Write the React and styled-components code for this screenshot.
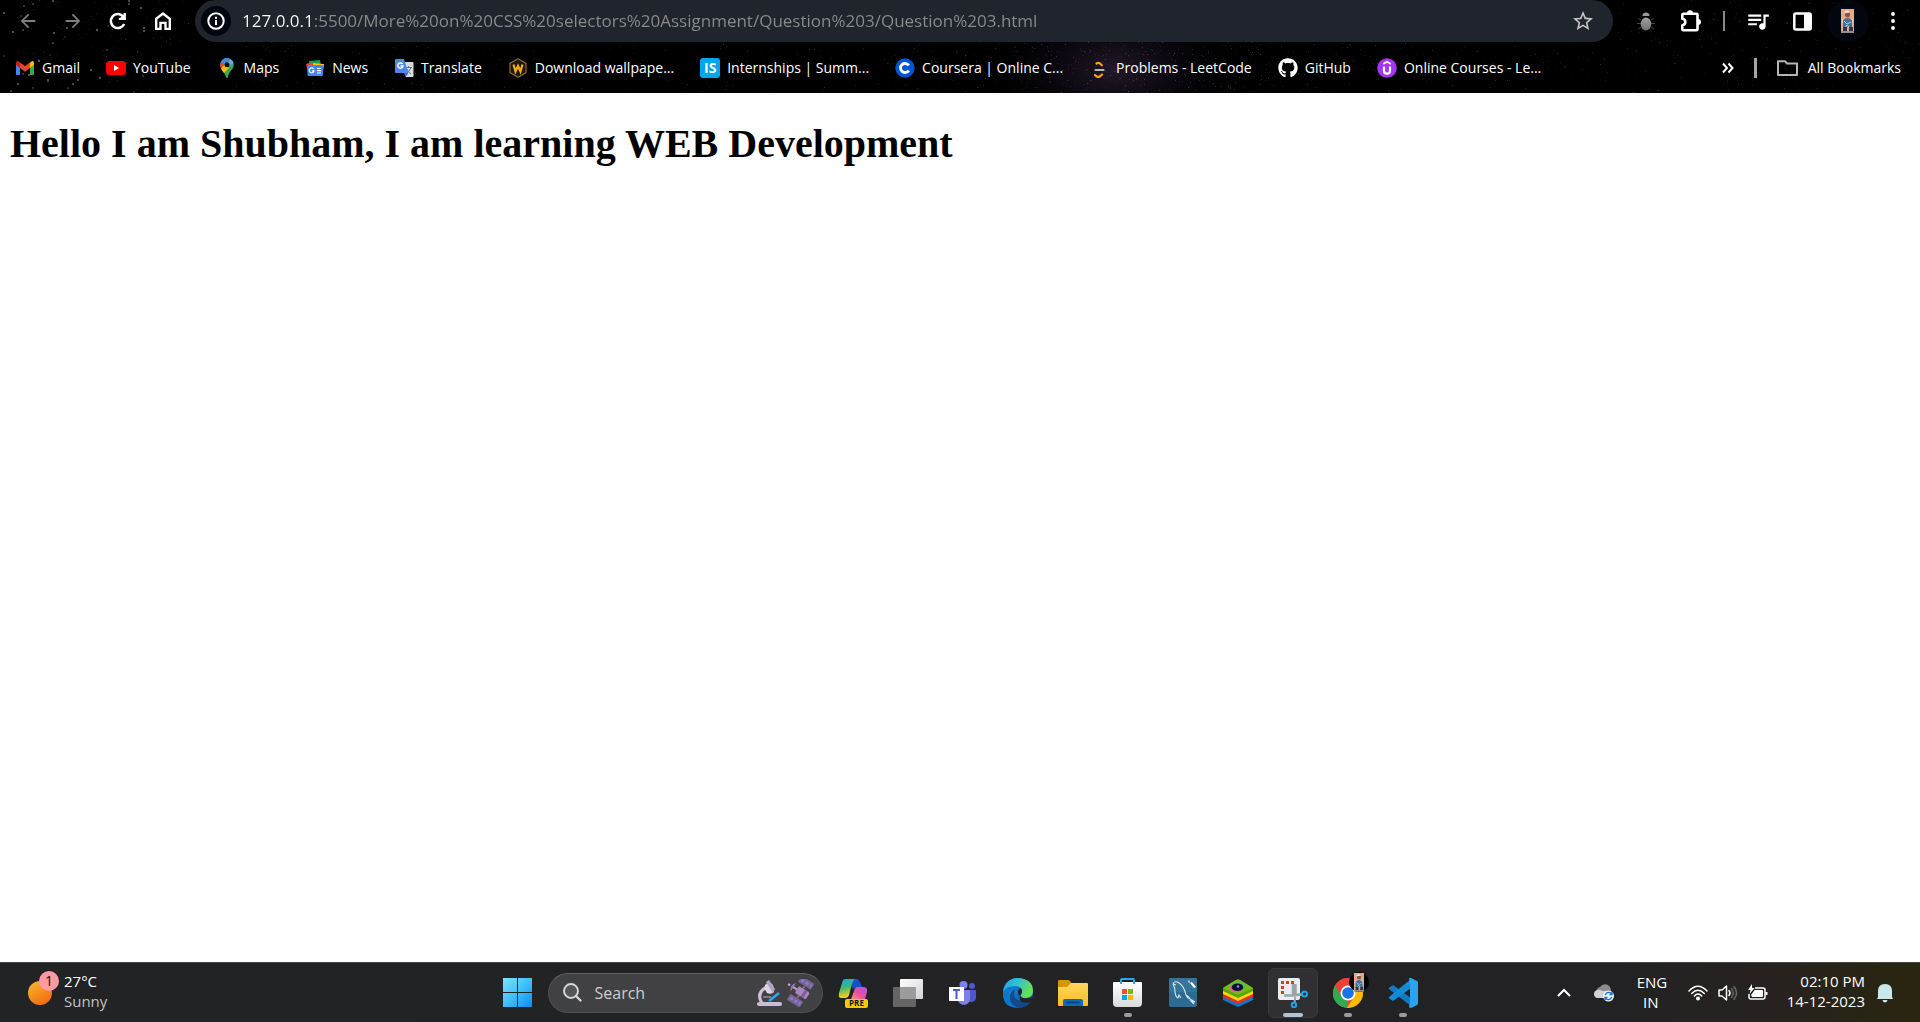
import React from "react";
import styled, { createGlobalStyle } from "styled-components";
import {
  MdArrowBack,
  MdArrowForward,
  MdStarBorder,
  MdQueueMusic,
} from "react-icons/md";
import { FaGithub } from "react-icons/fa";

const uiFont = `"Segoe UI", "Open Sans", "Noto Sans", sans-serif`;

const GlobalStyle = createGlobalStyle`
  *, *::before, *::after { box-sizing: border-box; }
  body { margin: 0; background: #fff; font-family: ${uiFont}; }
  button, input { font: inherit; color: inherit; }
  svg { display: block; flex: none; }
`;

const Screen = styled.div`
  min-height: 100vh;
  display: flex;
  flex-direction: column;
`;

/* ---------- browser chrome ---------- */

const BrowserHeader = styled.header`
  position: relative;
  background: #000;
  color: #fff;
  overflow: hidden;
`;

const StarField = styled.svg`
  position: absolute;
  inset: 0;
  width: 100%;
  height: 100%;
`;

const Toolbar = styled.div`
  position: relative;
  display: flex;
  align-items: center;
  height: 42px;
  padding: 0 5px;
`;

const ToolButton = styled.button`
  display: flex;
  align-items: center;
  justify-content: center;
  width: 45px;
  height: 42px;
  padding: 0;
  border: 0;
  background: none;
  color: ${(p) => (p.$muted ? "#7d7d7d" : "#fff")};
`;

const AddressBar = styled.form`
  flex: 1;
  min-width: 0;
  display: flex;
  align-items: center;
  height: 42px;
  margin: 0 10px;
  padding: 0 8px 0 6px;
  border-radius: 21px;
  background: #20242d;
`;

const SiteInfo = styled.button`
  display: flex;
  align-items: center;
  justify-content: center;
  width: 30px;
  height: 30px;
  padding: 0;
  border: 0;
  border-radius: 50%;
  background: #03060f;
  color: #fff;
`;

const AddressInput = styled.input`
  flex: 1;
  min-width: 0;
  height: 30px;
  margin-left: 11px;
  padding: 0;
  border: 0;
  outline: 0;
  font-size: 17px;
  line-height: 30px;
  background: linear-gradient(90deg, #fff 71px, #8b8b8c 71px);
  background-clip: text;
  -webkit-background-clip: text;
  -webkit-text-fill-color: transparent;
`;

const ToolDivider = styled.span`
  width: 2px;
  height: 20px;
  margin: 0 10px;
  background: #8a8a8a;
`;

const Profile = styled.span`
  display: flex;
  align-items: center;
  justify-content: center;
  width: 42px;
  height: 42px;
  border-radius: 50%;
  background: #03060f;
`;

const BookmarksBar = styled.nav`
  position: relative;
  display: flex;
  align-items: center;
  height: 51px;
  padding: 0 19px 0 15px;
  font-size: 14px;
  line-height: 20px;
  white-space: nowrap;
`;

const BookmarkList = styled.div`
  flex: 1;
  min-width: 0;
  display: flex;
  gap: 26px;
  overflow: hidden;
`;

const Bookmark = styled.a`
  display: flex;
  align-items: center;
  gap: ${(p) => p.$gap || "7px"};
  color: #fff;
  text-decoration: none;
`;

const OverflowButton = styled.button`
  display: flex;
  padding: 0;
  border: 0;
  background: none;
`;

const BookmarkDivider = styled.span`
  width: 3px;
  height: 20px;
  margin: 0 20px;
  background: #a5a5a5;
`;

/* ---------- page ---------- */

const Page = styled.main`
  flex: 1;
  padding: 0 10px;
  background: #fff;
`;

const Title = styled.h1`
  margin: 28px 0 0;
  font-family: "Times New Roman", "Liberation Serif", serif;
  font-size: 40px;
  line-height: 46px;
  font-weight: 700;
  color: #000;
`;

/* ---------- taskbar ---------- */

const Taskbar = styled.footer`
  display: grid;
  grid-template-columns: 1fr auto 1fr;
  align-items: center;
  height: 60px;
  border-top: 1px solid #454547;
  background: linear-gradient(90deg, #222325 0%, #222224 84%, #272220 92%, #29260f 100%);
  color: #fff;
  font-size: 14px;
  line-height: 20px;
`;

const Weather = styled.button`
  justify-self: start;
  display: flex;
  align-items: center;
  gap: 5px;
  padding: 0 0 0 28px;
  border: 0;
  background: none;
  text-align: left;
`;

const Stack = styled.span`
  display: flex;
  flex-direction: column;
  width: ${(p) => p.$width || "auto"};
  padding-bottom: ${(p) => (p.$raised ? "4px" : "2px")};
  font-size: 15px;
  text-align: ${(p) => p.$align || "left"};
  white-space: nowrap;
`;

const Soft = styled.span`
  color: #c2c2c2;
`;

const WeatherIcon = styled.span`
  position: relative;
  width: 31px;
  height: 44px;
  display: flex;
  align-items: center;
`;

const Badge = styled.span`
  position: absolute;
  top: 0;
  right: 0;
  width: 20px;
  height: 20px;
  border-radius: 50%;
  background: #ff99a4;
  color: #111;
  text-align: center;
  line-height: 20px;
`;

const Apps = styled.nav`
  display: flex;
  align-items: center;
  gap: 5px;
`;

const AppButton = styled.button`
  position: relative;
  display: flex;
  align-items: center;
  justify-content: center;
  width: 50px;
  height: 50px;
  padding: 0;
  border: 1px solid ${(p) => (p.$active ? "#39393b" : "transparent")};
  border-radius: 6px;
  background: ${(p) => (p.$active ? "#303032" : "none")};
`;

const Indicator = styled.span`
  position: absolute;
  bottom: 0;
  left: 50%;
  transform: translateX(-50%);
  width: ${(p) => (p.$active ? "20px" : "8px")};
  height: 4px;
  border-radius: 2px;
  background: ${(p) => (p.$active ? "#adc6d6" : "#9b9b9d")};
`;

const SearchBox = styled.label`
  display: flex;
  align-items: center;
  width: 275px;
  height: 40px;
  padding: 0 8px 0 14px;
  border: 1px solid #505052;
  border-top-color: #636365;
  border-radius: 20px;
  background: #414143;
`;

const SearchInput = styled.input`
  flex: 1;
  min-width: 0;
  padding: 0;
  margin-left: 13px;
  border: 0;
  outline: 0;
  background: none;
  font-size: 16px;
  &::placeholder { color: #cfcfcf; opacity: 1; }
`;

const Tray = styled.div`
  justify-self: end;
  display: flex;
  align-items: center;
  gap: 23px;
  padding-right: 27px;
`;

const TrayGroup = styled.span`
  display: flex;
  align-items: center;
  gap: ${(p) => p.$gap};
`;

/* ---------- drawings ---------- */

const stars = (() => {
  let seed = 20231214;
  const next = () => {
    seed = (seed * 1103515245 + 12345) % 2147483648;
    return seed / 2147483648;
  };
  const list = [];
  for (let i = 0; i < 2600; i += 1) {
    const dense = i % 3 === 0;
    const x = dense ? 1130 + (next() + next() + next() - 1.5) * 260 : next() * 1920;
    list.push({ x: Math.round(x), y: Math.round(next() * 92), o: 0.04 + next() * next() * 0.22 });
  }
  for (let i = 0; i < 40; i += 1) {
    list.push({ x: Math.round(next() * 145), y: Math.round(next() * 92), o: 0.12 + next() * 0.25, s: 2 });
  }
  return list;
})();

const Night = () => (
  <StarField viewBox="0 0 1920 93" preserveAspectRatio="xMidYMid slice" aria-hidden="true">
    <defs>
      <radialGradient id="haze">
        <stop offset="0" stopColor="#3b2a45" stopOpacity=".6" />
        <stop offset="1" stopColor="#0a0a1a" stopOpacity="0" />
      </radialGradient>
    </defs>
    <ellipse cx="1115" cy="70" rx="120" ry="70" fill="url(#haze)" />
    {stars.map((s, i) => (
      <rect key={i} x={s.x} y={s.y} width={s.s || 1} height={s.s || 1} fill="#dfe4ff" opacity={s.o} />
    ))}
  </StarField>
);

const ReloadIcon = () => (
  <svg width="20" height="20" viewBox="0 0 20 20" fill="none" stroke="#fff" strokeWidth="2.5">
    <path d="M16.2 13A7 7 0 1 1 14.9 5.2" />
    <path d="M16.8 2v6h-6" strokeWidth="2.2" />
    <path d="m16 3-4.5 4.5H16z" fill="#fff" stroke="none" />
  </svg>
);

const HomeIcon = () => (
  <svg width="20" height="20" viewBox="0 0 20 20" fill="none" stroke="#fff" strokeWidth="2.4">
    <path d="M3.2 7.8 10 2.6l6.8 5.2v10.1h-4.3v-6h-5v6H3.2z" />
  </svg>
);

const InfoIcon = () => (
  <svg width="18" height="18" viewBox="0 0 18 18" fill="none" stroke="#fff" strokeWidth="2">
    <circle cx="9" cy="9" r="7.7" />
    <path d="M9 8v5M9 4.8v2" />
  </svg>
);

const BugIcon = () => (
  <svg width="18" height="19" viewBox="0 0 18 19">
    <defs>
      <linearGradient id="bug" x2="0" y2="1">
        <stop stopColor="#a2a2a2" />
        <stop offset="1" stopColor="#707070" />
      </linearGradient>
    </defs>
    <g stroke="#444" strokeWidth="1" fill="none">
      <path d="M1 6.5 4 8M0 11.5h4M1 17l3-2M17 6.5 14 8M18 11.5h-4M17 17l-3-2" />
    </g>
    <path d="M5.5 4a3.5 3.5 0 0 1 7 0z" fill="#999" />
    <ellipse cx="9" cy="12" rx="5.3" ry="6.5" fill="url(#bug)" />
  </svg>
);

const PuzzleIcon = () => (
  <svg width="22" height="22" viewBox="0 0 22 22">
    <path
      d="M2.3 5.5V4.8c0-.7.4-1.1 1.1-1.1h13c.7 0 1.1.4 1.1 1.1v14.4c0 .7-.4 1.1-1.1 1.1h-13c-.7 0-1.1-.4-1.1-1.1v-4c4-.5 4-5.9 0-6.4z"
      fill="none"
      stroke="#fff"
      strokeWidth="2.6"
      strokeLinejoin="round"
    />
    <path d="M7 3.2a3 3 0 0 1 6 0zM18 9a3 3 0 0 1 0 6z" fill="#fff" />
  </svg>
);

const SidePanelIcon = () => (
  <svg width="19" height="19" viewBox="0 0 19 19">
    <rect x="1.3" y="1.6" width="16.4" height="15.8" rx="1.5" fill="none" stroke="#fff" strokeWidth="2.5" />
    <path d="M11 1h7v17h-7z" fill="#fff" />
  </svg>
);

const Portrait = () => (
  <g>
    <path d="M0 0h13v24H0z" fill="#e6a981" />
    <path d="M1 10h11v4H1z" fill="#d9d5cf" />
    <path d="M4 3q3-3 5 0v4q-2 3-5 0z" fill="#86584a" />
    <path d="M3.5 2.5q3-3 6 1l-6 .8z" fill="#e8e4ef" />
    <path d="M2 11q4-4 9 0v7H2z" fill="#456f9a" />
    <path d="m3 12 3 3 4-2M3 20l3-4 4 4" stroke="#a7d1df" fill="none" />
    <path d="M2 18h4v6H2zM8 18h4v6H8z" fill="#27364e" />
    <path d="M0 22h13v2H0z" fill="#9b8b84" />
  </g>
);

const AvatarIcon = () => (
  <svg width="13" height="24" viewBox="0 0 13 24"><Portrait /></svg>
);

const DotsIcon = () => (
  <svg width="4" height="18" viewBox="0 0 4 18" fill="#fff">
    <circle cx="2" cy="2" r="1.9" /><circle cx="2" cy="9" r="1.9" /><circle cx="2" cy="16" r="1.9" />
  </svg>
);

const ChevronsIcon = () => (
  <svg width="12" height="12" viewBox="0 0 12 12" fill="none" stroke="#fff" strokeWidth="2">
    <path d="m1 1.5 4 4.5-4 4.5M6.5 1.5l4 4.5-4 4.5" />
  </svg>
);

const FolderIcon = () => (
  <svg width="21" height="16" viewBox="0 0 21 16" fill="none" stroke="#b5b5b5" strokeWidth="2" strokeLinejoin="round">
    <path d="M1 1.2h7l2 2.3h10V15H1z" />
  </svg>
);

const GmailIcon = () => (
  <svg width="20" height="20" viewBox="0 0 20 20">
    <path d="M1 6v10q0 1 1 1h3V9z" fill="#4285f4" />
    <path d="M15 9v8h3q1 0 1-1V6z" fill="#34a853" />
    <path d="M15 4.5 17 3.2q2-.6 2 2V7l-4 3z" fill="#fbbc04" />
    <path d="M1 7V5.2q0-2.6 2-2L5 4.5V10z" fill="#c5221f" />
    <path d="M5 4.5 10 8l5-3.5V10l-5 3.7L5 10z" fill="#ea4335" />
  </svg>
);

const YouTubeIcon = () => (
  <svg width="20" height="20" viewBox="0 0 20 20">
    <rect y="3" width="20" height="14" rx="3.5" fill="#f00" />
    <path d="m8 7 5.2 3L8 13z" fill="#fff" />
  </svg>
);

const MapsIcon = () => (
  <svg width="20" height="20" viewBox="0 0 20 20">
    <clipPath id="pin"><path d="M10 0a6.8 6.8 0 0 1 6.8 6.8c0 4.7-5 6.2-5.8 12.2-.2 1.3-1.8 1.3-2 0-.6-3.5-5.8-7.2-5.8-12.2A6.8 6.8 0 0 1 10 0" /></clipPath>
    <g clipPath="url(#pin)">
      <path d="M0 0h20v20H0z" fill="#34a853" />
      <path d="m2 11 13-13H4L3 4l5 4z" fill="#4285f4" />
      <path d="M3 3.5 8 7 4 10.5H0z" fill="#ea4335" />
      <path d="m3 12 5-6 4 4-6 6z" fill="#fbbc04" />
      <path d="m14 1-4 4 3 3 5-4z" fill="#6ba0f7" />
    </g>
    <circle cx="10" cy="6.8" r="2.5" fill="#111" />
  </svg>
);

const NewsIcon = () => (
  <svg width="20" height="20" viewBox="0 0 20 20">
    <path d="m4 3 11-1 1 8H5z" fill="#0c9d58" />
    <path d="m1 6 6-2 3 7-7 4z" fill="#ea4335" />
    <path d="m8 5 11 1-1 7H8z" fill="#ffc107" />
    <rect x="2.5" y="7" width="15.5" height="11" rx="1" fill="#4285f4" />
    <path d="M8.5 10.8a2.4 2.4 0 1 0 .5 2H7M12 10.5h4M12 12.7h4M12 15h4" fill="none" stroke="#fff" strokeWidth="1.2" />
  </svg>
);

const TranslateIcon = () => (
  <svg width="20" height="20" viewBox="0 0 20 20">
    <path d="M8 4h10.5q1 0 1 1v13q0 1-1 1H12z" fill="#d8dadd" />
    <path d="M11 9.5h7M14.5 8v1.5M17 9.5q-1 4-5 5.5M13 11q1 3 4 5" stroke="#607d8b" fill="none" />
    <path d="M2 1h8l4.5 14H2q-1 0-1-1V2q0-1 1-1" fill="#4f86ec" />
    <path d="m10 15 4.5 0-3 4z" fill="#3367d6" />
    <path d="M8.5 6a2.6 2.6 0 1 0 .5 2H6.5" fill="none" stroke="#fff" strokeWidth="1.4" />
  </svg>
);

const WallpaperIcon = () => (
  <svg width="20" height="20" viewBox="0 0 20 20">
    <path d="m10 .8 8 4.6v9.2l-8 4.6-8-4.6V5.4z" fill="#141722" stroke="#94691a" strokeWidth="1.2" />
    <path d="m5.5 6.5 2 7L10 8l2.5 5.5 2-7" fill="none" stroke="#f9a80d" strokeWidth="2.2" />
  </svg>
);

const IconTile = styled.span`
  display: flex;
  align-items: center;
  justify-content: center;
  width: 20px;
  height: 20px;
  border-radius: 3px;
  background: #00a5ec;
  color: #fff;
  font-size: 14px;
  font-weight: 700;
`;

const CourseraIcon = () => (
  <svg width="20" height="20" viewBox="0 0 20 20">
    <circle cx="10" cy="10" r="9.7" fill="#0056d2" />
    <path d="M13.8 7.6a4.5 4.5 0 1 0 0 4.8" fill="none" stroke="#fff" strokeWidth="2.8" />
  </svg>
);

const LeetCodeIcon = () => (
  <svg width="20" height="20" viewBox="0 0 20 20" fill="none" strokeLinecap="round">
    <path d="m5 7-2.5 3q-1.5 2 0 4L5 17" stroke="#15110b" strokeWidth="2.2" />
    <path d="M7.5 5.5q2-1.3 3.5 0l1.8 1.8M6 17q2.5 3 5 1.5l2-2" stroke="#f89f1b" strokeWidth="2.2" />
    <path d="M6.5 12H14.5" stroke="#b8b8b8" strokeWidth="2.2" />
  </svg>
);

const UdemyIcon = () => (
  <svg width="20" height="20" viewBox="0 0 20 20" fill="none" stroke="#fff" strokeWidth="2.2">
    <circle cx="10" cy="10" r="9.8" fill="#a435f0" stroke="none" />
    <path d="m6.2 6 3.8-2.2L13.8 6" strokeWidth="1.7" />
    <path d="M7 8.5v4.2q0 3 3 3t3-3V8.5" />
  </svg>
);

const SunIcon = () => (
  <svg width="24" height="24" viewBox="0 0 24 24">
    <defs><linearGradient id="sun" x2=".6" y2="1"><stop stopColor="#f5bd2e" /><stop offset="1" stopColor="#f36d10" /></linearGradient></defs>
    <circle cx="12" cy="12" r="12" fill="url(#sun)" />
  </svg>
);

const StartIcon = () => (
  <svg width="29" height="29" viewBox="0 0 29 29">
    <defs><linearGradient id="win" gradientUnits="userSpaceOnUse" x1="0" y1="0" x2="29" y2="29"><stop stopColor="#7fe0ff" /><stop offset=".5" stopColor="#3fc0fb" /><stop offset="1" stopColor="#0a8ef5" /></linearGradient></defs>
    <path d="M0 0h14v14H0zM15 0h14v14H15zM0 15h14v14H0zM15 15h14v14H15z" fill="url(#win)" />
  </svg>
);

const SearchIcon = () => (
  <svg width="19" height="19" viewBox="0 0 19 19" fill="none" stroke="#d5d9da" strokeLinecap="round">
    <circle cx="8" cy="8" r="7" strokeWidth="1.9" fill="#565658" />
    <path d="m13 13 4.5 4.5" strokeWidth="2.3" />
  </svg>
);

const DoodleIcon = () => (
  <svg width="57" height="28" viewBox="0 0 57 28">
    <path d="M8 9q-9 6-3 15" fill="none" stroke="#cfc0d9" strokeWidth="3" />
    <path d="M8 6q4-5 8 0l1 7q-3 3-7 1L7 9z" fill="#ddd3e4" />
    <path d="m9 3 3-2 6 9-2 4z" fill="#b3a3c3" />
    <path d="M6 18h8" stroke="#81768e" strokeWidth="2" />
    <path d="m12 22 10-8" stroke="#2caceb" strokeWidth="2.5" />
    <rect y="23" width="25" height="4" rx="2" fill="#cbbbd5" />
    <g transform="translate(44 13) rotate(32)">
      <rect x="-8" y="-14" width="15" height="7" fill="#766493" />
      <path d="M-6-12h3v3h-3zM-1-12h3v3h-3zM4-12h2v3H4z" fill="#9274d5" />
      <rect x="-8" y="7" width="15" height="7" fill="#766493" />
      <path d="M-6 9h3v3h-3zM-1 9h3v3h-3zM4 9h2v3H4z" fill="#9274d5" />
      <path d="M-1-7h2V7h-2z" fill="#796789" />
      <rect x="-5" y="-4" width="13" height="8" rx="1.5" fill="#a987be" />
      <path d="M2-4h3v8H2z" fill="#7d5c9a" />
      <path d="M-5 0h-5" stroke="#c49ad5" strokeWidth="2" />
      <path d="M-9-5q-5 5 0 10z" fill="#9678b0" />
      <circle cx="-14" cy="0" r="1.3" fill="#d39ee7" />
    </g>
  </svg>
);

const CopilotIcon = () => (
  <svg width="30" height="30" viewBox="0 0 30 30">
    <defs>
      <linearGradient id="cpA" x2=".2" y2="1"><stop stopColor="#17a8e8" /><stop offset=".5" stopColor="#42b777" /><stop offset="1" stopColor="#f6d314" /></linearGradient>
      <linearGradient id="cpB" x1="1" x2=".2" y2="1"><stop stopColor="#a957ee" /><stop offset=".5" stopColor="#ea4f9e" /><stop offset="1" stopColor="#ff9b54" /></linearGradient>
    </defs>
    <path d="M12 1h6q3 0 4 3l2 5h-5q-3 0-4 3z" fill="#1450cf" />
    <path d="M7 1h10q-2 1-3 5l-3 11q-1 3-4 3H3q-3 0-2-5L4 5q1-4 3-4" fill="url(#cpA)" />
    <path d="M19 9h6q5 0 4 5l-2 7q-1 3-4 3H12l4-11q1-4 3-4" fill="url(#cpB)" />
    <rect x="7" y="21" width="23" height="9" rx="2" fill="#fbc70d" />
    <text x="18.5" y="28.4" textAnchor="middle" fontFamily="Open Sans, sans-serif" fontWeight="700" fontSize="8" fill="#151515">PRE</text>
  </svg>
);

const TaskViewIcon = () => (
  <svg width="30" height="28" viewBox="0 0 30 28">
    <defs><linearGradient id="tv" x2="1" y2="1"><stop stopColor="#fff" /><stop offset="1" stopColor="#d3d3d3" /></linearGradient></defs>
    <rect y="8" width="23" height="20" rx="1" fill="#656565" />
    <rect x="7" width="23" height="20" rx="1" fill="url(#tv)" />
    <path d="M7 8h16v12H7z" fill="#9c9c9c" />
  </svg>
);

const TeamsIcon = () => (
  <svg width="27" height="24" viewBox="0 0 27 24">
    <circle cx="23" cy="5" r="3" fill="#5059c9" />
    <circle cx="14.5" cy="4" r="4" fill="#7b83eb" />
    <path d="M18 9h9v7q0 5-5 5h-4z" fill="#5059c9" />
    <path d="M8 9h13v8q0 6-6 7-6-1-7-7z" fill="#7b83eb" />
    <rect y="6" width="15" height="14" fill="#fff" />
    <path d="M4 9h7M7.5 9v9" stroke="#5059c9" strokeWidth="2" />
  </svg>
);

const EdgeIcon = () => (
  <svg width="30" height="30" viewBox="0 0 30 30">
    <defs>
      <linearGradient id="edA" x2="1" y2=".4"><stop stopColor="#1aa0e6" /><stop offset=".5" stopColor="#35c1d3" /><stop offset="1" stopColor="#68e054" /></linearGradient>
      <linearGradient id="edB" x2="1" y2="1"><stop stopColor="#1595df" /><stop offset="1" stopColor="#0c4ba5" /></linearGradient>
    </defs>
    <circle cx="15" cy="15" r="15" fill="url(#edB)" />
    <path d="M0 14Q2 0 15 0q15 1 15 13 0 7-8 7-5 0-5-2 2-2 2-4 0-6-7-6Q4 8 0 14" fill="url(#edA)" />
    <path d="M0 14q4-6 11-5-6 3-6 9 0 8 9 12Q-1 29 0 14" fill="#0b78d0" />
    <path d="M12 11q-4 11 8 12 4 1 9-2-3 8-12 9-9-2-10-9-1-6 5-10" fill="#114a8b" />
    <path d="M17 18q-2-1-2-4t3-4q2 4 0 6-2 2 2 4 6 1 12-2l-2 5q-6 3-11 1-3-1-2-6" fill="#232427" />
  </svg>
);

const ExplorerIcon = () => (
  <svg width="30" height="26" viewBox="0 0 30 26">
    <defs><linearGradient id="fold" x2="0" y2="1"><stop stopColor="#ffd659" /><stop offset="1" stopColor="#fbbd27" /></linearGradient></defs>
    <path d="M0 1q0-1 1-1h9q1 0 2 1l2 3v5H0z" fill="#d99508" />
    <path d="M0 7h9l4-4h16q1 0 1 1v21q0 1-1 1H1q-1 0-1-1z" fill="url(#fold)" />
    <path d="M5 26v-5q0-2 2-2h16q2 0 2 2v5z" fill="#0b6bb8" />
    <path d="M9 22.5h12" stroke="#063e79" strokeWidth="1.5" strokeLinecap="round" />
  </svg>
);

const StoreIcon = () => (
  <svg width="29" height="30" viewBox="0 0 29 30">
    <defs><linearGradient id="bag" x2="0" y2="1"><stop stopColor="#fff" /><stop offset="1" stopColor="#dadada" /></linearGradient></defs>
    <path d="M0 5q0-1 1-1h27q1 0 1 1v20q0 4-4 4H4q-4 0-4-4z" fill="url(#bag)" />
    <path d="M8 6V2q0-1 1-1h11q1 0 1 1v4" fill="none" stroke="#28a8e6" strokeWidth="2" />
    <path d="M9 11h5v5H9z" fill="#f25022" /><path d="M15 11h5v5h-5z" fill="#7fba00" />
    <path d="M9 17h5v5H9z" fill="#00a4ef" /><path d="M15 17h5v5h-5z" fill="#ffb900" />
  </svg>
);

const MySqlIcon = () => (
  <svg width="28" height="29" viewBox="0 0 28 29" fill="none">
    <rect width="28" height="29" rx="2" fill="#2d6b93" />
    <path d="M0 0h28v14H0z" fill="#3d7fa5" opacity=".5" />
    <path d="M4 6q2-4 6-1 5 3 7 12 3 1 4 4l5 3-4-1 3 3M4 6q2 4 2 7 0 5 3 7l1-3 2 3M4 6l3 1M17 17q1 3 4 4" stroke="#d7e7ee" strokeWidth="1.1" />
    <path d="m20 2 1 3 2-1 4 5-2 1-4-5-2-1z" fill="#fff" />
  </svg>
);

const BlueStacksIcon = () => (
  <svg width="30" height="28" viewBox="0 0 30 28">
    <path d="M0 17v4l15 7 15-7v-4l-15 5z" fill="#0879c9" />
    <path d="M0 14v4l15 7 15-7v-4z" fill="#e52d27" />
    <path d="M0 11v4l15 7 15-7v-4z" fill="#ffd400" />
    <path d="M0 9 13 1q2-1 4 0l13 8v3l-15 7L0 12z" fill="#53a70d" />
    <path d="m0 9 13-8q2-1 4 0l13 8-15 7z" fill="#74bd18" />
    <ellipse cx="13.5" cy="9" rx="7" ry="4.3" fill="#e65aae" />
    <ellipse cx="15" cy="7.5" rx="6.5" ry="4" fill="#3fb5a0" />
    <ellipse cx="14.5" cy="8.2" rx="5.7" ry="3.8" fill="#0c1224" />
    <circle cx="15" cy="7.5" r="1.2" fill="#8c8cff" />
  </svg>
);

const SnipIcon = () => (
  <svg width="30" height="30" viewBox="0 0 30 30" fill="none">
    <rect width="22" height="22" rx="2" fill="#e9edf0" />
    <path d="M3 4.5h13M4.5 3v13" stroke="#d63e0b" strokeWidth="3" strokeDasharray="3 2" />
    <path d="M15 6v10.5h9M17.5 6v12M6 17.5h11" stroke="#9ca4aa" strokeWidth="2.5" />
    <path d="M17.5 18.5 16.5 24M19 17.5l5-1" stroke="#9ca4aa" strokeWidth="2" />
    <circle cx="26.5" cy="16" r="2.5" stroke="#1da5eb" strokeWidth="2" />
    <circle cx="16" cy="27" r="2.2" stroke="#1da5eb" strokeWidth="2" />
  </svg>
);

const ChromeIcon = () => (
  <svg width="42" height="42" viewBox="-6 0 42 42">
    <clipPath id="chromeDisc"><circle cx="15" cy="21" r="15" /></clipPath>
    <g clipPath="url(#chromeDisc)">
      <path d="M0 6h30v30H0z" fill="#ea4335" />
      <path d="m1 12 14 23-5 3-12-9V13z" fill="#34a853" />
      <path d="M15 14h16v23H13l8-12z" fill="#fbbc05" />
      <path d="M2 13 8.5 24.5 15 29l-3 8-14-8z" fill="#34a853" />
      <path d="M15 14h17L26 5H4l-3 7 7.5 12z" fill="#ea4335" />
    </g>
    <circle cx="15" cy="21" r="7.5" fill="#fff" />
    <circle cx="15" cy="21" r="5.8" fill="#1a73e8" />
    <circle cx="26" cy="10" r="10" fill="#050505" />
    <g transform="translate(21 1) scale(.77)"><Portrait /></g>
  </svg>
);

const CodeIcon = () => (
  <svg width="30" height="30" viewBox="0 0 30 30">
    <path d="m2 9 3-2 18 13v8L1 11q-1-1 1-2" fill="#0f7cc4" />
    <path d="m2 21 3 2L23 10V1L1 19q-1 1 1 2" fill="#138cd8" />
    <path d="M21 0q1-1 2 0l6 3q1 0 1 2v20q0 2-1 2l-6 3q-1 0-2-1l1-5V6z" fill="#2aa4f2" />
  </svg>
);

const UpIcon = () => (
  <svg width="14" height="9" viewBox="0 0 14 9" fill="none" stroke="#fff" strokeWidth="2"><path d="m1 8 6-6 6 6" /></svg>
);

const CloudIcon = () => (
  <svg width="20" height="18" viewBox="0 0 20 18">
    <path d="M4 10a4 4 0 0 1 2-7q3-4 8-2 3 2 3 6l-7 5z" fill="#8c8c8c" />
    <path d="M3 6q3-1 5 1h7v7H3Q0 13 0 10t3-4" fill="#d2d2d2" />
    <circle cx="14.5" cy="12" r="5.5" fill="#e8f2fa" />
    <path d="M11.3 11q1-2.600 3.400-2.600 2 0 3 1.600M17.700 13q-1 2.600-3.400 2.600-2 0-3-1.600M18 8v2.500h-2.500M11 16v-2.500h2.500" fill="none" stroke="#1671c8" strokeWidth="1.3" />
  </svg>
);

const WifiIcon = () => (
  <svg width="20" height="16" viewBox="0 0 20 16" fill="none" stroke="#fff" strokeWidth="1.5" strokeLinecap="round">
    <path d="M1 6q9-9.5 18 0M3.7 8.5q6.3-6.5 12.6 0M6.3 11q3.7-4 7.4 0" />
    <circle cx="10" cy="13.5" r="1.3" fill="#fff" />
  </svg>
);

const VolumeIcon = () => (
  <svg width="20" height="18" viewBox="0 0 20 18" fill="none" stroke="#fff" strokeWidth="1.5" strokeLinejoin="round" strokeLinecap="round">
    <path d="M1 6h3l4.5-4v14L4 12H1z" />
    <path d="M11 6.5q2 2.5 0 5" />
    <path d="M13.5 4.5q3.5 4.5 0 9M16 2.5q5 6.5 0 13" stroke="#6b6765" />
  </svg>
);

const BatteryIcon = () => (
  <svg width="20" height="17" viewBox="0 0 20 17" fill="none" stroke="#fff" strokeWidth="1.5">
    <path d="M7 4h8q2 0 2 2v7q0 2-2 2H3q-2 0-2-2v-3" />
    <path d="M6 7q0-1 1-1h7q1 0 1 1v5q0 1-1 1H4l-1-2z" fill="#fff" stroke="none" />
    <path d="M18.5 8v3" strokeWidth="2" />
    <path d="M4 0 0 6h2.5L1.5 10 6.5 4H4z" fill="#fff" stroke="none" />
  </svg>
);

const BellIcon = () => (
  <svg width="16" height="20" viewBox="0 0 16 20" fill="#cbe7ee">
    <path d="M1 14V8q0-7 7-7t7 7v6l1 2H0zM5.5 17h5q-.5 2.5-2.5 2.5T5.5 17" />
  </svg>
);

const bookmarks = [
  ["Gmail", <GmailIcon />],
  ["YouTube", <YouTubeIcon />],
  ["Maps", <MapsIcon />],
  ["News", <NewsIcon />],
  ["Translate", <TranslateIcon />],
  ["Download wallpape...", <WallpaperIcon />],
  ["Internships | Summ...", <IconTile aria-hidden="true">IS</IconTile>],
  ["Coursera | Online C...", <CourseraIcon />],
  ["Problems - LeetCode", <LeetCodeIcon />],
  ["GitHub", <FaGithub size={20} />],
  ["Online Courses - Le...", <UdemyIcon />],
];

const apps = [
  { name: "Copilot", icon: <CopilotIcon /> },
  { name: "Task view", icon: <TaskViewIcon /> },
  { name: "Teams", icon: <TeamsIcon /> },
  { name: "Edge", icon: <EdgeIcon /> },
  { name: "File Explorer", icon: <ExplorerIcon /> },
  { name: "Microsoft Store", icon: <StoreIcon />, running: true },
  { name: "MySQL Workbench", icon: <MySqlIcon /> },
  { name: "BlueStacks", icon: <BlueStacksIcon /> },
  { name: "Snipping Tool", icon: <SnipIcon />, running: true, active: true },
  { name: "Chrome", icon: <ChromeIcon />, running: true },
  { name: "Visual Studio Code", icon: <CodeIcon />, running: true },
];

export default function App() {
  return (
    <Screen>
      <GlobalStyle />
      <BrowserHeader>
        <Night />
        <Toolbar>
          <ToolButton $muted aria-label="Back"><MdArrowBack size={22} /></ToolButton>
          <ToolButton $muted aria-label="Forward"><MdArrowForward size={22} /></ToolButton>
          <ToolButton aria-label="Reload"><ReloadIcon /></ToolButton>
          <ToolButton aria-label="Home"><HomeIcon /></ToolButton>
          <AddressBar onSubmit={(e) => e.preventDefault()}>
            <SiteInfo type="button" aria-label="Site information"><InfoIcon /></SiteInfo>
            <AddressInput
              aria-label="Address"
              spellCheck={false}
              defaultValue="127.0.0.1:5500/More%20on%20CSS%20selectors%20Assignment/Question%203/Question%203.html"
            />
            <ToolButton type="button" aria-label="Bookmark this page"><MdStarBorder size={24} color="#c4c4c4" /></ToolButton>
          </AddressBar>
          <ToolButton aria-label="Debugger"><BugIcon /></ToolButton>
          <ToolButton aria-label="Extensions"><PuzzleIcon /></ToolButton>
          <ToolDivider />
          <ToolButton aria-label="Media"><MdQueueMusic size={26} /></ToolButton>
          <ToolButton aria-label="Side panel"><SidePanelIcon /></ToolButton>
          <ToolButton aria-label="Profile"><Profile><AvatarIcon /></Profile></ToolButton>
          <ToolButton aria-label="Menu"><DotsIcon /></ToolButton>
        </Toolbar>
        <BookmarksBar aria-label="Bookmarks">
          <BookmarkList>
            {bookmarks.map(([label, icon]) => (
              <Bookmark href="#" key={label}>{icon}<span>{label}</span></Bookmark>
            ))}
          </BookmarkList>
          <OverflowButton aria-label="More bookmarks"><ChevronsIcon /></OverflowButton>
          <BookmarkDivider />
          <Bookmark href="#" $gap="10px"><FolderIcon /><span>All Bookmarks</span></Bookmark>
        </BookmarksBar>
      </BrowserHeader>

      <Page>
        <Title>Hello I am Shubham, I am learning WEB Development</Title>
      </Page>

      <Taskbar>
        <Weather>
          <WeatherIcon><SunIcon /><Badge>1</Badge></WeatherIcon>
          <Stack $raised><span>27°C</span><Soft>Sunny</Soft></Stack>
        </Weather>
        <Apps aria-label="Taskbar">
          <AppButton aria-label="Start"><StartIcon /></AppButton>
          <SearchBox>
            <SearchIcon />
            <SearchInput type="text" placeholder="Search" aria-label="Search" />
            <DoodleIcon />
          </SearchBox>
          {apps.map((app) => (
            <AppButton key={app.name} aria-label={app.name} $active={app.active}>
              {app.icon}
              {app.running && <Indicator $active={app.active} />}
            </AppButton>
          ))}
        </Apps>
        <Tray>
          <UpIcon />
          <CloudIcon />
          <Stack $width="28px" $align="center"><span>ENG</span><span>IN</span></Stack>
          <TrayGroup $gap="19px">
            <TrayGroup $gap="10px"><WifiIcon /><VolumeIcon /><BatteryIcon /></TrayGroup>
            <TrayGroup $gap="12px">
              <Stack $align="right" $raised><span>02:10 PM</span><span>14-12-2023</span></Stack>
              <BellIcon />
            </TrayGroup>
          </TrayGroup>
        </Tray>
      </Taskbar>
    </Screen>
  );
}
